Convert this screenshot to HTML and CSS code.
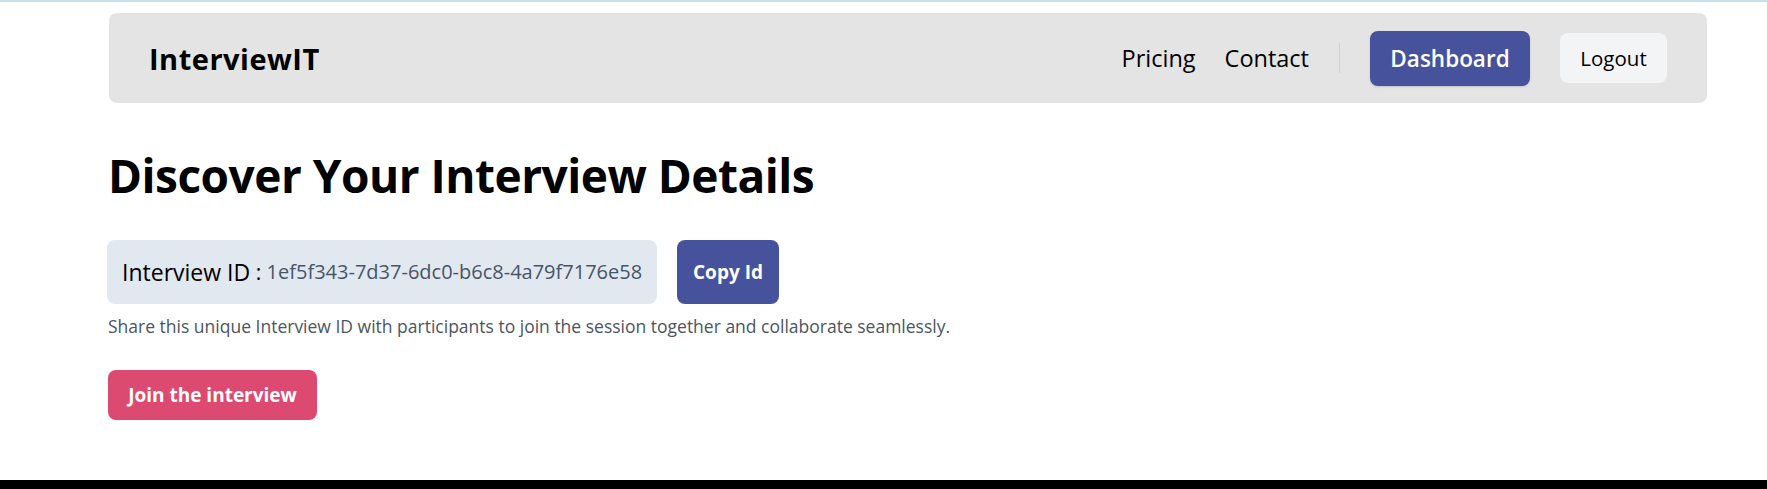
FILE: index.html
```html
<!DOCTYPE html>
<html lang="en">
<head>
<meta charset="utf-8">
<title>InterviewIT</title>
<link rel="stylesheet" href="styles.css">
</head>
<body>
<div class="page">
  <div class="topline"></div>
  <div class="wrap">
    <nav class="nav">
      <div class="logo">InterviewIT</div>
      <div class="nav-right">
        <a class="nav-link">Pricing</a>
        <a class="nav-link">Contact</a>
        <span class="sep"></span>
        <button class="btn-dash">Dashboard</button>
        <button class="btn-logout">Logout</button>
      </div>
    </nav>
    <main class="main">
      <h1 class="title">Discover Your Interview Details</h1>
      <div class="id-row">
        <div class="id-box"><span class="id-label">Interview ID</span><span class="id-colon"> : </span><span class="id-value">1ef5f343-7d37-6dc0-b6c8-4a79f7176e58</span></div>
        <button class="btn-copy">Copy Id</button>
      </div>
      <p class="desc">Share this unique Interview ID with participants to join the session together and collaborate seamlessly.</p>
      <button class="btn-join">Join the interview</button>
    </main>
  </div>
</div>
</body>
</html>
```

FILE: styles.css
```css
html { background: #000; }
body {
  margin: 0;
  font-family: "Open Sans", "Noto Sans", sans-serif;
  color: #000;
}
.page {
  background: #fff;
  height: 480px;
  overflow: hidden;
}
.topline {
  height: 2px;
  background: #c9dcf4;
}
.wrap {
  padding: 11px 0 0 108px;
  width: 1599px;
}
.nav {
  margin-left: 1px;
  height: 90px;
  background: #e4e4e4;
  border-radius: 8px;
  display: flex;
  align-items: center;
  justify-content: space-between;
  padding: 0 40px;
  box-sizing: border-box;
}
.logo {
  font-size: 29px;
  font-weight: 700;
  letter-spacing: 0.5px;
}
.nav-right {
  display: flex;
  align-items: center;
}
.nav-link {
  font-size: 23.5px;
  color: #000;
  margin-right: 29px;
}
.nav-link + .nav-link { margin-right: 30px; }
.sep {
  width: 1px;
  height: 30px;
  background: #d2d2d2;
  margin-right: 30px;
}
.btn-dash {
  width: 160px;
  height: 55px;
  border: 0;
  border-radius: 8px;
  background: #46529c;
  color: #fff;
  font-family: inherit;
  font-size: 22.5px;
  font-weight: 600;
  box-shadow: 0 1px 2px rgba(0,0,0,0.15);
  margin-right: 30px;
}
.btn-logout {
  width: 107px;
  height: 50px;
  border: 0;
  border-radius: 8px;
  background: #f3f4f6;
  color: #000;
  font-family: inherit;
  font-size: 20.5px;
  font-weight: 500;
}
.main {
  padding-top: 44px;
}
.title {
  margin: 0;
  font-size: 46px;
  font-weight: 700;
  line-height: 1.25;
  letter-spacing: -0.5px;
}
.id-row {
  display: flex;
  margin-top: 35px;
  gap: 20px;
}
.id-box {
  margin-left: -1px;
  width: 550px;
  height: 64px;
  box-sizing: border-box;
  background: #e2e8f0;
  border-radius: 8px;
  padding: 0 15px;
  display: flex;
  align-items: center;
  white-space: nowrap;
}
.id-label { font-size: 23px; }
.id-colon { font-size: 21px; white-space: pre; }
.id-value { font-size: 20px; color: #475569; }
.btn-copy {
  width: 102px;
  height: 64px;
  border: 0;
  border-radius: 8px;
  background: #46529c;
  color: #fff;
  font-family: inherit;
  font-size: 19px;
  font-weight: 700;
}
.desc {
  margin: 9px 0 0;
  font-size: 17.5px;
  color: #4b5563;
  line-height: 26px;
}
.btn-join {
  margin-top: 31px;
  width: 209px;
  height: 50px;
  border: 0;
  border-radius: 8px;
  background: #dc4a72;
  color: #fff;
  font-family: inherit;
  font-size: 19px;
  font-weight: 700;
}
```
